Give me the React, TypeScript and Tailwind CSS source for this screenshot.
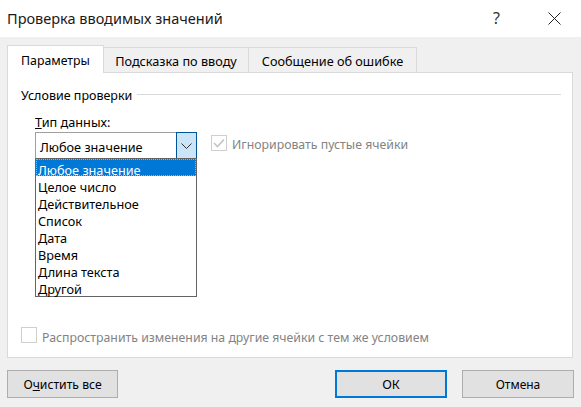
import React from "react";

const font = "font-['Noto_Sans','Open_Sans',sans-serif]";
const options = ["Любое значение", "Целое число", "Действительное", "Список", "Дата", "Время", "Длина текста", "Другой"];

function Check({ checked }: { checked?: boolean }) {
  return (
    <span className="w-4 h-4 shrink-0 border border-[#cfcfcf] bg-white flex items-center justify-center">
      {checked && (
        <svg width="12" height="10" viewBox="0 0 12 10" fill="none" stroke="#c4c4c4" strokeWidth="1.6">
          <path d="M1 5l3.5 3.5L11 1.5" />
        </svg>
      )}
    </span>
  );
}

export default function App() {
  return (
    <div className={`w-[581px] h-[407px] bg-[#f0f0f0] flex flex-col overflow-hidden text-[#000] text-[12.7px] leading-[17px] ${font}`}>
      <div className="h-[37px] shrink-0 bg-white flex items-center pl-[7px] pb-[1px]">
        <span className="text-[14.5px] text-[#1a1a1a] grow">Проверка вводимых значений</span>
        <span className="text-[16px] text-[#333] mr-[48px]">?</span>
        <svg className="mr-[20px]" width="13" height="13" viewBox="0 0 13 13" stroke="#222" strokeWidth="1" fill="none">
          <path d="M.5.5l12 12M12.5.5l-12 12" />
        </svg>
      </div>

      <div className="px-[7px] pt-[9px] flex flex-col grow">
        <div className="flex items-end h-[27px] relative z-10 -mb-px">
          <div className="w-[97px] h-[28px] bg-white border border-[#d9d9d9] border-b-0 flex items-center justify-center pt-[2px] text-[12.3px]">Параметры</div>
          <div className="w-[145px] h-[26px] border-t border-r border-b border-[#d9d9d9] flex items-center justify-center pt-[3px]">Подсказка по вводу</div>
          <div className="w-[168px] h-[26px] border-t border-r border-b border-[#d9d9d9] flex items-center justify-center pt-[3px]">Сообщение об ошибке</div>
        </div>

        <div className="w-[566px] h-[286px] bg-white border border-[#d9d9d9] pl-[13px] pr-[11px] flex flex-col">
          <div className="flex items-center gap-[5px] mt-[14px] h-[17px]">
            <span className="text-[12.5px]">Условие проверки</span>
            <div className="grow h-px bg-[#d9d9d9] mt-[-3px]" />
          </div>

          <div className="ml-[14px] mt-[10px] h-[17px]"><u>Т</u>ип данных:</div>

          <div className="ml-[14px] mt-[1px] flex items-start relative">
            <div className="w-[162px] h-[27px] border border-[#a0a0a0] flex bg-white">
              <span className="grow pl-[4px] pt-[6px]">Любое значение</span>
              <span className="w-[21px] -my-px -mr-px bg-[#cce4f7] border border-[#005499] flex items-center justify-center">
                <svg width="11" height="6" viewBox="0 0 11 6" fill="none" stroke="#333" strokeWidth="1">
                  <path d="M.5.5l5 5 5-5" />
                </svg>
              </span>
            </div>
            <label className="flex items-start gap-[5px] ml-[14px] mt-[3px] text-[#838383] text-[12.3px]">
              <Check checked />
              <span className="pt-[1px]">Игнорировать пустые ячейки</span>
            </label>

            <ul className="absolute left-0 top-[26px] w-[162px] h-[139px] border border-[#646464] bg-white z-20">
              {options.map((o, i) => (
                <li key={o} className={`h-[17px] pl-[2px] pt-[3px] ${i === 0 ? "bg-[#0078d7] text-white outline-1 -outline-offset-1 outline-dotted outline-[#f0a040]" : ""}`}>{o}</li>
              ))}
            </ul>
          </div>

          <label className="mt-[168px] flex items-start gap-[5px] text-[#838383] text-[12.3px]">
            <Check />
            <span className="pt-[2px]">Распространить изменения на другие ячейки с тем же условием</span>
          </label>
        </div>

        <div className="flex mt-[12px]">
          <button className="w-[111px] h-[28px] pt-[1px] text-[12.2px] bg-[#e1e1e1] border border-[#adadad]">О<u>ч</u>истить все</button>
          <div className="grow" />
          <button className="w-[112px] h-[28px] pt-[1px] bg-[#e1e1e1] border-2 border-[#0078d7]">ОК</button>
          <button className="w-[112px] h-[28px] pt-[1px] text-[12px] ml-[15px] bg-[#e1e1e1] border border-[#adadad]">Отмена</button>
        </div>
      </div>
    </div>
  );
}
